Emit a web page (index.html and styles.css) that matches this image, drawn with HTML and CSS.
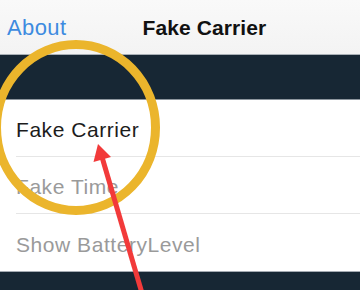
FILE: index.html
```html
<!DOCTYPE html>
<html>
<head>
<meta charset="utf-8">
<link rel="stylesheet" href="styles.css">
</head>
<body>
<div class="screen">
  <div class="nav">
    <span class="back">About</span>
    <span class="title">Fake Carrier</span>
  </div>
  <div class="band"></div>
  <div class="list">
    <div class="row"><span class="label on">Fake Carrier</span></div>
    <div class="row"><span class="label">Fake Time</span></div>
    <div class="row last"><span class="label">Show BatteryLevel</span></div>
  </div>
  <div class="band bottom"></div>
  <svg class="overlay" width="360" height="290" viewBox="0 0 360 290">
    <ellipse cx="76" cy="127.5" rx="79.5" ry="83" fill="none" stroke="#ebb52c" stroke-width="9"/>
    <line x1="102" y1="157" x2="144" y2="300" stroke="#f23a3a" stroke-width="5"/>
    <polygon points="98,144 111,157 93.5,162" fill="#f23a3a"/>
  </svg>
</div>
</body>
</html>
```
FILE: styles.css
```css
html, body {
  margin: 0;
  padding: 0;
}
body {
  width: 360px;
  height: 290px;
  overflow: hidden;
  font-family: "Liberation Sans", Arial, sans-serif;
}
.screen {
  position: relative;
  width: 360px;
  height: 290px;
  display: flex;
  flex-direction: column;
  background: #ffffff;
}
.nav {
  height: 55px;
  flex: none;
  display: flex;
  align-items: center;
  padding-top: 1px;
  box-sizing: border-box;
  background: linear-gradient(#f9f9f9, #f3f3f3);
  border-bottom: 1px solid #a9b0b6;
}
.back {
  margin-left: 7px;
  color: #3d8be0;
  font-size: 22px;
  letter-spacing: 0.4px;
}
.title {
  margin-left: 76px;
  color: #111111;
  font-size: 21px;
  font-weight: bold;
  letter-spacing: 0.1px;
}
.band {
  height: 44px;
  flex: none;
  background: #172734;
  border-bottom: 1px solid #8d969e;
}
.band.bottom {
  flex: 1;
  border-bottom: none;
  border-top: 1px solid #a4abb2;
}
.list {
  display: flex;
  flex-direction: column;
  padding-left: 16px;
}
.row {
  height: 57px;
  display: flex;
  align-items: center;
  border-bottom: 1px solid #e6e6e6;
  padding-top: 4px;
  box-sizing: border-box;
}
.row.last {
  border-bottom: none;
}
.label {
  font-size: 21px;
  color: #9a9a9a;
  letter-spacing: 0.55px;
}
.label.on {
  color: #1c1c1c;
}
.overlay {
  position: absolute;
  left: 0;
  top: 0;
}
```
